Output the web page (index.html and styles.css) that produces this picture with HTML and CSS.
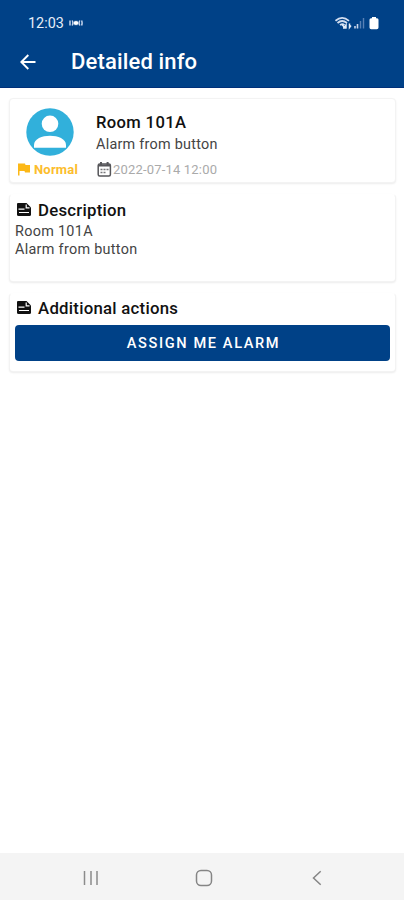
FILE: index.html
```html
<!DOCTYPE html>
<html lang="en">
<head>
<meta charset="utf-8">
<title>Detailed info</title>
<link rel="stylesheet" href="styles.css">
</head>
<body>
<div class="screen">
  <header class="header">
    <div class="status">
      <span class="clock">12:03</span>
      <svg class="cast" width="14" height="8" viewBox="0 0 14 8"><g fill="none" stroke="#c5d4ec" stroke-width="1.500"><path d="M1 1.500v5M3.200 1.500q1.400 2.500 0 5M10.800 1.500q-1.400 2.500 0 5M12.600 1.500q1 2.500 0 5"/></g><path d="M4.500 4l1.500-2.500 1 1 1-1 1.500 2.500-1.500 2.500-1-1-1 1z" fill="#fff"/></svg>
      <svg class="signals" width="46" height="16" viewBox="0 0 46 16">
        <g fill="none" stroke="#d3def0" stroke-width="1.700"><path d="M.5 5.800q6.500-6 13.500 0M2.500 8q4.500-4 9.500 0M5 10.200q2.500-2 4.500 0"/></g>
        <path d="M7 9.500l3 3.500h-2M11 13.500V10l-1.500 2M14.500 8.500v4l1.500-2" fill="none" stroke="#e4ecf8" stroke-width="1.500"/>
        <path d="M20 11v2.500M22.500 9v4.500" stroke="#c8d5eb" stroke-width="1.600"/>
        <path d="M25.500 6v7.500M28.500 3v10.500" stroke="#5780b5" stroke-width="1.400"/>
        <path d="M37 2h4v1.200h1q1.500 0 1.500 1.500v7.800q0 1.700-1.700 1.700h-5.600q-1.700 0-1.700-1.700V4.700q0-1.500 1.500-1.500h1z" fill="#fff"/>
      </svg>
    </div>
    <div class="toolbar">
      <svg class="back" width="16" height="16" viewBox="0 0 16 16"><path d="M15.500 8H1.500M8.300 1L1.300 8l7 7" fill="none" stroke="#fff" stroke-width="1.900"/></svg>
      <h1>Detailed info</h1>
    </div>
  </header>
  <main>
    <section class="card summary">
      <div class="side">
        <svg class="avatar" width="48" height="48" viewBox="0 0 48 48"><circle cx="24" cy="24" r="23.700" fill="#31b0db"/><circle cx="24" cy="15.800" r="8.300" fill="#fff"/><path d="M8 39.800V37c0-6 8-9.200 16-9.200S40 31 40 37v2.800z" fill="#fff"/></svg>
        <div class="priority">
          <svg width="14" height="13" viewBox="0 0 14 13"><path d="M1 .5h7l.5 1.500H13v7.500H8L7.500 8H2.500v4.500H1z" fill="#fcb817"/></svg>
          <span>Normal</span>
        </div>
      </div>
      <div class="details">
        <h2>Room 101A</h2>
        <p>Alarm from button</p>
        <div class="date">
          <svg width="15" height="15" viewBox="0 0 15 15"><rect x="1.200" y="2" width="12.200" height="12" rx="1.500" fill="#fff" stroke="#56565a" stroke-width="1.500"/><path d="M1 3.500h12.500M4 0v3M10.600 0v3" stroke="#56565a" stroke-width="2"/><path d="M3.500 7.500h2M6.500 7.500h2M9.500 7.500h2M3.500 10.500h2M6.500 10.500h2" stroke="#77777a" stroke-width="1.500"/></svg>
          <time>2022-07-14 12:00</time>
        </div>
      </div>
    </section>
    <section class="card description">
      <h3><svg width="14" height="13" viewBox="0 0 14 13"><path d="M1 0h8.500L14 4.500v7q0 1.500-1.500 1.500H1.500Q0 13 0 11.500V1Q0 0 1 0z" fill="#111"/><path d="M9.200 1.500V4.800h3.300M1.500 6.200h6M2 9.500h10" fill="none" stroke="#fff" stroke-width="1.200"/></svg><span>Description</span></h3>
      <p>Room 101A</p>
      <p>Alarm from button</p>
    </section>
    <section class="card actions">
      <h3><svg width="14" height="13" viewBox="0 0 14 13"><path d="M1 0h8.500L14 4.500v7q0 1.500-1.500 1.500H1.500Q0 13 0 11.500V1Q0 0 1 0z" fill="#111"/><path d="M9.200 1.500V4.800h3.300M1.500 6.200h6M2 9.500h10" fill="none" stroke="#fff" stroke-width="1.200"/></svg><span>Additional actions</span></h3>
      <button type="button">ASSIGN ME ALARM</button>
    </section>
  </main>
  <nav class="navbar">
    <svg width="16" height="16" viewBox="0 0 16 16"><path d="M1.500 1v14M8 1v14M14 1v14" stroke="#8b8b8b" stroke-width="1.500"/></svg>
    <svg class="home" width="18" height="18" viewBox="0 0 18 18"><rect x="1.500" y="1.500" width="15" height="15" rx="4.500" fill="none" stroke="#858585" stroke-width="1.500"/></svg>
    <svg width="10" height="16" viewBox="0 0 10 16"><path d="M8.700 1.200L1.500 8l7.200 6.800" fill="none" stroke="#858585" stroke-width="1.500"/></svg>
  </nav>
</div>
</body>
</html>
```
FILE: styles.css
```css
* { box-sizing: border-box; }
body, h1, h2, h3, p { margin: 0; }
body { background: #fff; font-family: Roboto, sans-serif; }
svg { display: block; flex: none; }
.screen { height: 900px; display: flex; flex-direction: column; }
.header { height: 88px; background: #004187; color: #fff; border-bottom: 1px solid #00307a; }
.status { height: 38px; padding: 8px 23px 0 28px; display: flex; align-items: center; }
.clock { font-size: 14.4px; color: #e6edf8; }
.cast { margin-left: 5px; }
.signals { margin-left: auto; }
.toolbar { height: 48px; padding-left: 20px; display: flex; align-items: center; }
.toolbar h1 { margin-left: 35px; font-size: 22px; font-weight: 500; line-height: 28px; letter-spacing: .15px; }
main { flex: 1; padding: 10px 8px 0 9px; }
.card { background: #fff; border: 1px solid #f3f3f3; border-radius: 4px; box-shadow: 0 1px 2px rgba(0, 0, 0, .08); }
.summary { height: 85px; display: flex; }
.side { width: 86px; padding: 9px 0 0 7px; }
.avatar { margin-left: 9px; }
.priority { display: flex; align-items: center; height: 17px; margin-top: 5px; gap: 3px; color: #fcbd2c; font-size: 13px; font-weight: 700; letter-spacing: .2px; }
.details { padding-top: 13px; }
.details h2 { font-size: 16.6px; line-height: 22px; font-weight: 500; color: #111; letter-spacing: .35px; }
.details p { font-size: 14.4px; line-height: 22px; color: #444; letter-spacing: .25px; }
.date { display: flex; align-items: center; height: 17px; margin: 5px 0 0 1px; gap: 1px; font-size: 13px; color: #aaa; letter-spacing: .18px; }
.description { height: 88px; margin-top: 11px; padding: 5px; border-top-color: transparent; }
.actions { height: 79px; margin-top: 11px; padding: 4px 5px; border-top-color: transparent; }
h3 { display: flex; align-items: center; gap: 7px; height: 21px; padding-left: 2px; font-size: 16.8px; line-height: 21px; font-weight: 500; color: #111; letter-spacing: .25px; }
h3 svg { margin-top: -2px; }
.description h3 { margin-bottom: 2px; }
.description p { font-size: 14.4px; line-height: 18px; color: #444; letter-spacing: .3px; }
button { display: block; width: 375px; height: 36px; margin-top: 6px; padding: 0 0 0 2px; border: 0; border-radius: 4px; background: #004187; color: #fff; font: 500 14.6px Roboto, sans-serif; letter-spacing: 1.6px; }
.navbar { height: 47px; padding: 2px 82px 0 83px; background: #f4f4f4; display: flex; align-items: center; justify-content: space-between; }
.home { margin-right: 4px; }
```
